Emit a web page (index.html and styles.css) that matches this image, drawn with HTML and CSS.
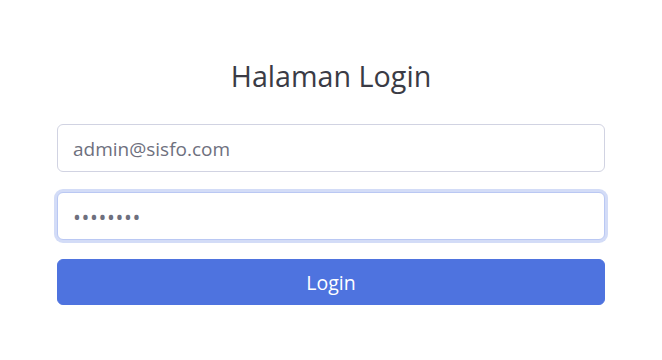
FILE: index.html
```html
<!DOCTYPE html>
<html lang="id">
<head>
<meta charset="utf-8">
<title>Halaman Login</title>
<link rel="stylesheet" href="styles.css">
</head>
<body>
<div class="wrap">
  <h3 class="title">Halaman Login</h3>
  <form class="form">
    <input class="field" type="email" value="admin@sisfo.com">
    <input class="field field-focus field-pass" type="password" value="12345678">
    <button class="btn" type="button">Login</button>
  </form>
</div>
</body>
</html>
```

FILE: styles.css
```css
* { box-sizing: border-box; }
html, body { margin: 0; padding: 0; background: #fff; }
body {
  font-family: "Open Sans", "Noto Sans", sans-serif;
  color: #3a3b45;
}
.wrap {
  width: 548px;
  margin: 0 auto;
  padding-top: 56px;
}
.title {
  margin: 0 0 28px;
  font-weight: 400;
  font-size: 28.7px;
  line-height: 40px;
  text-align: center;
  color: #3a3b45;
}
.form {
  display: flex;
  flex-direction: column;
}
.field {
  display: block;
  width: 100%;
  height: 48px;
  padding: 1px 15px 0;
  font-family: inherit;
  font-size: 19px;
  color: #6e707e;
  background: #fff;
  border: 1px solid #d1d3e2;
  border-radius: 6px;
  outline: none;
  margin-bottom: 20px;
}
.field-pass {
  font-size: 21px;
  letter-spacing: 0.6px;
}
.field-focus {
  border-color: #bac8f3;
  box-shadow: 0 0 0 3px rgba(78, 115, 223, 0.25);
  margin-bottom: 19px;
}
.btn {
  display: block;
  width: 100%;
  height: 46px;
  padding-top: 1px;
  font-family: inherit;
  font-size: 19.5px;
  color: #fff;
  background: #4e73df;
  border: 1px solid #4e73df;
  border-radius: 6px;
  cursor: pointer;
}
```
